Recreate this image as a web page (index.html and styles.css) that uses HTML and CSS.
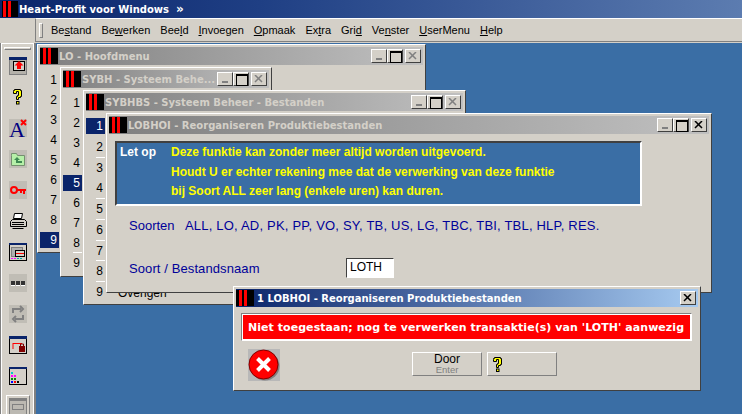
FILE: index.html
```html
<!DOCTYPE html>
<html lang="nl">
<head>
<meta charset="utf-8">
<title>Heart-Profit voor Windows</title>
<link rel="stylesheet" href="styles.css">
</head>
<body>
<div class="app">
  <header class="apptitle">
    <span class="logo logo-app"><i></i><i></i></span>
    <span class="apptitle-text">Heart-Profit voor Windows</span>
    <span class="apptitle-more">»</span>
  </header>
  <nav class="menubar">
    <span class="grip"></span>
    <span class="menu-item">Be<u>s</u>tand</span>
    <span class="menu-item">Be<u>w</u>erken</span>
    <span class="menu-item">Bee<u>l</u>d</span>
    <span class="menu-item"><u>I</u>nvoegen</span>
    <span class="menu-item"><u>O</u>pmaak</span>
    <span class="menu-item">Ex<u>t</u>ra</span>
    <span class="menu-item">Gri<u>d</u></span>
    <span class="menu-item">Ve<u>n</u>ster</span>
    <span class="menu-item"><u>U</u>serMenu</span>
    <span class="menu-item"><u>H</u>elp</span>
  </nav>
  <div class="workspace">
    <aside class="toolbar">
      <span class="tool-grip"></span>
      <svg class="tool" width="18" height="18" viewBox="0 0 18 18"><rect x="0.5" y="0.5" width="17" height="17" fill="#b4b1aa" stroke="#808080"/><rect x="0" y="0" width="18" height="3" fill="#0a246a"/><rect x="4.500" y="4.500" width="11" height="9" fill="#d4d0c8" stroke="#000"/><path d="M10 4l4.500 4.500H12v3.500H8V8.500H5.500z" fill="#f00"/></svg>
      <svg class="tool" width="18" height="18" viewBox="0 0 18 18"><path d="M4.500 3.500v-1h1v-1h6v1h1v6h-1v1h-2v2h-2v-3h1v-1h1v-4h-2v2h-3z" fill="#ff0" stroke="#000"/><rect x="7.500" y="13.500" width="2.500" height="2.500" fill="#ff0" stroke="#000"/></svg>
      <svg class="tool tool-shade" width="18" height="18" viewBox="0 0 18 18"><text class="tool-a" x="0" y="18">A</text><path d="M12 1l5 5M17 1l-5 5" stroke="#f00" stroke-width="2"/></svg>
      <svg class="tool tool-shade" width="18" height="18" viewBox="0 0 18 18"><path d="M2.500 5.500v-2h5l1 2h7v10h-13z" fill="#b5f0a8" stroke="#74906f"/><path d="M8 7l-3 3h2v3h6v-2H9v-1h2z" fill="#3e8a52"/></svg>
      <svg class="tool tool-shade" width="18" height="18" viewBox="0 0 18 18"><circle cx="5" cy="9" r="3" fill="none" stroke="#f00" stroke-width="2"/><path d="M8 8h9v2h-1v3h-2v-3h-1v2h-2v-2H8z" fill="#f00"/></svg>
      <svg class="tool" width="18" height="18" viewBox="0 0 18 18"><path d="M5.500 1.500h8l-1 5h-8z" fill="#fff" stroke="#000"/><path d="M3.500 7.500h12l2 2v5h-16v-5z" fill="#d4d0c8" stroke="#000"/><path d="M3 10.500h12M3 12.500h12M3.500 16.500h11" stroke="#000"/></svg>
      <svg class="tool" width="18" height="18" viewBox="0 0 18 18"><rect x="0.500" y="0.500" width="17" height="17" fill="#d4d0c8" stroke="#000"/><rect width="18" height="2" fill="#0a246a"/><rect x="2.500" y="4.500" width="11" height="9" fill="#b0b0b0" stroke="#808080"/><rect x="6.500" y="7.500" width="9" height="6" fill="#d4d0c8" stroke="#000"/><path d="M7 10.500h8" stroke="#f00"/><path d="M2 15.500h2M5 15.500h2" stroke="#f0f"/><path d="M8 15.500h2M11 15.500h2" stroke="#0aa"/></svg>
      <svg class="tool tool-shade" width="18" height="18" viewBox="0 0 18 18"><path d="M2 7h4v4H2zM7 7h4v4H7zM12 7h4v4h-4z" fill="#333"/><path d="M2 11.500h4M7 11.500h4M12 11.500h4" stroke="#fff"/></svg>
      <svg class="tool tool-shade" width="18" height="18" viewBox="0 0 18 18"><path d="M4 8V4h8M11 1l3 3-3 3M14 10v4H6M7 11l-3 3 3 3" fill="none" stroke="#808080" stroke-width="2"/></svg>
      <svg class="tool" width="18" height="18" viewBox="0 0 18 18"><rect x="0.500" y="0.500" width="17" height="17" fill="#d4d0c8" stroke="#000"/><rect width="18" height="3" fill="#0a246a"/><path d="M4 7.500h9M4 7v6" stroke="#f00"/><rect x="10" y="10" width="6" height="6" fill="#800000"/><path d="M11.500 10V8h3v2" fill="none" stroke="#800000"/></svg>
      <svg class="tool" width="18" height="18" viewBox="0 0 18 18"><rect x="0.500" y="0.500" width="17" height="17" fill="#d4d0c8" stroke="#000"/><rect width="18" height="2" fill="#0a246a"/><path d="M2 5h2v2H2z" fill="#0cc"/><path d="M2 8h2v2H2zM5 8h2v2H5z" fill="#f0f"/><path d="M5 11h2v2H5zM2 11h2v2H2z" fill="#080"/><path d="M2 14h2v2H2z" fill="#00f"/><path d="M5 14h2v2H5z" fill="#f00"/><path d="M8 14h2v2H8z" fill="#000"/></svg>
      <span class="tool-pressed"><svg width="18" height="18" viewBox="0 0 18 18"><rect x="0.500" y="0.500" width="17" height="17" fill="#bcb9b2" stroke="#808080"/><rect width="18" height="3" fill="#808080"/><rect x="3.500" y="6.500" width="11" height="5" fill="none" stroke="#808080"/></svg></span>
    </aside>
    <main class="desktop">
      <section class="win win-lo inactive">
        <div class="titlebar">
          <span class="logo"><i></i><i></i></span>
          <span class="title">LO - Hoofdmenu</span>
          <span class="controls"><span class="btn min"></span><span class="btn max"></span><span class="btn close off"><svg width="10" height="8" viewBox="0 0 10 8"><path d="M1 0l7 7M8 0L1 7" stroke="#808080" stroke-width="1.500" fill="none"/></svg></span></span>
        </div>
        <ol class="rows rows-lo">
          <li>1</li><li>2</li><li>3</li><li>4</li><li>5</li><li>6</li><li>7</li><li>8</li><li class="sel">9</li>
        </ol>
      </section>
      <section class="win win-sybh inactive">
        <div class="titlebar">
          <span class="logo"><i></i><i></i></span>
          <span class="title">SYBH - Systeem Behe...</span>
          <span class="controls"><span class="btn min"></span><span class="btn max"></span><span class="btn close off"><svg width="10" height="8" viewBox="0 0 10 8"><path d="M1 0l7 7M8 0L1 7" stroke="#808080" stroke-width="1.500" fill="none"/></svg></span></span>
        </div>
        <ol class="rows rows-sybh">
          <li>1</li><li>2</li><li>3</li><li>4</li><li class="sel">5</li><li>6</li><li>7</li><li>8</li><li class="line">9</li>
        </ol>
      </section>
      <section class="win win-sybhbs inactive">
        <div class="titlebar">
          <span class="logo"><i></i><i></i></span>
          <span class="title">SYBHBS - Systeem Beheer - Bestanden</span>
          <span class="controls"><span class="btn min"></span><span class="btn max"></span><span class="btn close off"><svg width="10" height="8" viewBox="0 0 10 8"><path d="M1 0l7 7M8 0L1 7" stroke="#808080" stroke-width="1.500" fill="none"/></svg></span></span>
        </div>
        <ol class="rows rows-sybhbs">
          <li class="sel">1</li><li>2</li><li class="line">3</li><li>4</li><li class="line">5</li><li class="line">6</li><li class="line">7</li><li class="line">8</li><li class="line">9</li>
        </ol>
        <div class="overigen">Overigen</div>
      </section>
      <section class="win win-lobhoi inactive">
        <div class="titlebar">
          <span class="logo"><i></i><i></i></span>
          <span class="title">LOBHOI - Reorganiseren Produktiebestanden</span>
          <span class="controls"><span class="btn min"></span><span class="btn max"></span><span class="btn close"><svg width="10" height="8" viewBox="0 0 10 8"><path d="M1 0l7 7M8 0L1 7" stroke="#000" stroke-width="1.500" fill="none"/></svg></span></span>
        </div>
        <div class="notice">
          <span class="notice-label">Let op</span>
          <div class="notice-text">
            <p>Deze funktie kan zonder meer altijd worden uitgevoerd.</p>
            <p>Houdt U er echter rekening mee dat de verwerking van deze funktie</p>
            <p>bij Soort ALL zeer lang (enkele uren) kan duren.</p>
          </div>
        </div>
        <div class="soorten">
          <span class="soorten-label">Soorten</span>
          <span>ALL, LO, AD, PK, PP, VO, SY, TB, US, LG, TBC, TBI, TBL, HLP, RES.</span>
        </div>
        <div class="field">
          <label class="field-label">Soort / Bestandsnaam</label>
          <span class="input">LOTH</span>
        </div>
      </section>
      <section class="win win-dialog">
        <div class="titlebar active">
          <span class="logo"><i></i><i></i></span>
          <span class="title">1 LOBHOI - Reorganiseren Produktiebestanden</span>
          <span class="controls"><span class="btn close"><svg width="10" height="8" viewBox="0 0 10 8"><path d="M1 0l7 7M8 0L1 7" stroke="#000" stroke-width="1.500" fill="none"/></svg></span></span>
        </div>
        <div class="error">Niet toegestaan; nog te verwerken transaktie(s) van 'LOTH' aanwezig</div>
        <div class="actions">
          <svg class="stop" width="32" height="32" viewBox="0 0 32 32"><rect width="32" height="32" fill="#b8b8b8"/><circle cx="17" cy="17" r="14.500" fill="#808080"/><circle cx="15.500" cy="15.500" r="14.500" fill="#f00" stroke="#800000"/><path d="M9.500 9.500l12 12M21.500 9.500l-12 12" stroke="#fff" stroke-width="4"/></svg>
          <span class="push door"><span>Door</span><small>Enter</small></span>
          <span class="push help"><svg width="12" height="16" viewBox="0 0 12 16"><path d="M1.500 3.500v-1h1v-1h6v1h1v6h-1v1h-2v2h-2v-3h1v-1h1v-4h-2v2h-3z" fill="#ff0" stroke="#000"/><rect x="4.500" y="13" width="2.500" height="2.500" fill="#ff0" stroke="#000"/></svg></span>
        </div>
      </section>
    </main>
  </div>
</div>
</body>
</html>
```
FILE: styles.css
```css
* { box-sizing: border-box; }
html, body { margin: 0; padding: 0; }
body { width: 742px; height: 414px; overflow: hidden; background: #d4d0c8; font-family: "Liberation Sans", Arial, sans-serif; font-size: 12px; color: #000; }
.app { width: 742px; height: 414px; display: flex; flex-direction: column; overflow: hidden; }
.apptitle { flex: none; height: 18px; display: flex; align-items: center; padding-left: 2px; background: linear-gradient(90deg, #0a246a 0%, #1f3f84 35%, #5c7cb0 100%); color: #fff; font-weight: bold; font-family: "DejaVu Sans", sans-serif; font-size: 10px; }
.apptitle-text { margin-left: 1px; }
.apptitle-more { margin-left: 7px; font-size: 12px; line-height: 12px; }
.logo { flex: none; width: 18px; height: 16px; background: #000; display: flex; gap: 2px; padding-left: 3px; }
.logo i { width: 3px; height: 100%; background: #f00; }
.logo-app { width: 16px; padding-left: 1px; }
.menubar { flex: none; height: 24px; display: flex; align-items: center; margin-left: 35px; padding-left: 3px; border-top: 1px solid #fff; border-bottom: 1px solid #808080; border-left: 1px solid #808080; }
.grip { width: 4px; height: 15px; border: 1px solid; border-color: #fff #808080 #808080 #fff; margin-right: 8px; }
.menu-item { margin-right: 10px; font-size: 11px; white-space: nowrap; }
.workspace { flex: 1; display: flex; min-height: 0; }
.toolbar { flex: none; width: 36px; margin-top: 1px; display: flex; flex-direction: column; align-items: center; gap: 13px; padding-top: 4px; border-left: 1px solid #808080; border-right: 2px solid #808080; box-shadow: inset 1px 1px 0 #fff, inset -1px 0 0 #fff; overflow: hidden; }
.tool-grip { width: 27px; height: 3px; flex: none; border: 1px solid; border-color: #fff #808080 #808080 #fff; margin-bottom: -6px; }
.tool { flex: none; overflow: visible; }
.tool-shade { background: #c0bdb5; }
.tool-a { font-family: "Liberation Serif", serif; font-size: 22px; fill: #000080; }
.tool-pressed { flex: none; width: 24px; height: 24px; display: flex; align-items: center; justify-content: center; border: 1px solid; border-color: #fff #808080 #808080 #fff; margin-top: -3px; }
.desktop { flex: 1; position: relative; margin-top: 1px; background: #3a6ea5; overflow: hidden; }
.win { position: absolute; background: #d4d0c8; border: 1px solid; border-color: #fff #404040 #404040 #fff; box-shadow: inset 1px 1px 0 #d4d0c8; padding: 2px; }
.win-lo { left: 1px; top: 1px; width: 389px; height: 209px; }
.win-sybh { left: 24px; top: 24px; width: 212px; height: 210px; }
.win-sybhbs { left: 47px; top: 47px; width: 383px; height: 215px; }
.win-lobhoi { left: 70px; top: 70px; width: 606px; height: 180px; }
.win-dialog { left: 197px; top: 243px; width: 468px; height: 105px; }
.titlebar { display: flex; align-items: center; height: 18px; padding: 1px 2px 1px 0; color: #d4d0c8; font-family: "DejaVu Sans", sans-serif; font-weight: bold; font-size: 10px; white-space: nowrap; }
.inactive > .titlebar { background: linear-gradient(90deg, #808080, #c0c0c0); }
.titlebar.active { background: linear-gradient(90deg, #0a246a, #a6caf0); color: #fff; }
.title { margin-left: 1px; flex: 1; overflow: hidden; }
.active .title { margin-left: 3px; }
.controls { display: flex; flex: none; }
.btn { width: 16px; height: 14px; display: flex; align-items: center; justify-content: center; background: #d4d0c8; border: 1px solid; border-color: #fff #404040 #404040 #fff; position: relative; }
.btn.close { margin-left: 2px; }
.btn.min::after { content: ""; position: absolute; left: 4px; bottom: 2px; width: 6px; height: 2px; background: #808080; }
.btn.max::after { content: ""; position: absolute; left: 2px; top: 1px; width: 10px; height: 9px; border: 1px solid #000; border-top-width: 2px; }
.rows { list-style: none; margin: 7px 0 0; padding: 0; font-size: 12px; text-align: right; width: 19px; display: grid; row-gap: 4px; }
.rows li { line-height: 16px; padding-right: 2px; position: relative; }
.rows .sel { background: #0a246a; color: #fff; }
.rows-sybhbs { row-gap: 4.750px; }
.rows .line::before { content: ""; position: absolute; left: 10px; right: 0; top: -3px; height: 1px; background: #fff; }
.overigen { position: absolute; left: 34px; top: 195px; font-size: 12px; }
.notice { display: flex; width: 527px; margin: 7px 0 0 6px; height: 65px; background: #3a6ea5; border: 2px solid; border-color: #404040 #fff #fff #404040; padding-top: 2px; font-weight: bold; font-size: 12px; }
.notice-label { width: 51px; margin-left: 3px; color: #fff; line-height: 15px; }
.notice-text { color: #ff0; white-space: nowrap; }
.notice-text p { margin: 0 0 4.500px; line-height: 15px; }
.soorten { display: flex; margin: 13px 0 0 20px; color: #000099; font-size: 13px; letter-spacing: 0.200px; line-height: 14px; white-space: nowrap; }
.soorten-label { width: 56px; letter-spacing: 0; }
.field { display: flex; align-items: center; margin: 25px 0 0 20px; color: #000099; font-size: 13px; letter-spacing: 0.100px; }
.field-label { width: 217px; }
.input { width: 48px; height: 20px; background: #fff; border: 1px solid; border-color: #404040 #fff #fff #404040; padding-left: 3px; line-height: 17px; color: #000; font-size: 12px; letter-spacing: 0; }
.error { height: 28px; margin: 6px 6px 0 5px; background: #f00; border: 1px solid; border-color: #808080 #fff #fff #808080; box-shadow: inset 0 0 0 1px #fff; color: #fff; font-weight: bold; font-family: "DejaVu Sans", sans-serif; font-size: 11px; letter-spacing: 0.050px; line-height: 27px; padding-left: 6px; white-space: nowrap; }
.actions { display: flex; align-items: flex-start; margin: 8px 0 0 12px; }
.stop { flex: none; }
.push { height: 24px; margin-top: 3px; background: #d4d0c8; border: 1px solid; border-color: #fff #808080 #808080 #fff; display: flex; flex-direction: column; align-items: center; justify-content: center; }
.door { margin-left: 132px; width: 70px; font-size: 12px; line-height: 11px; }
.door small { color: #808080; font-size: 9.500px; line-height: 10px; }
.help { margin-left: 5px; width: 70px; align-items: flex-start; padding-left: 4px; }
```
